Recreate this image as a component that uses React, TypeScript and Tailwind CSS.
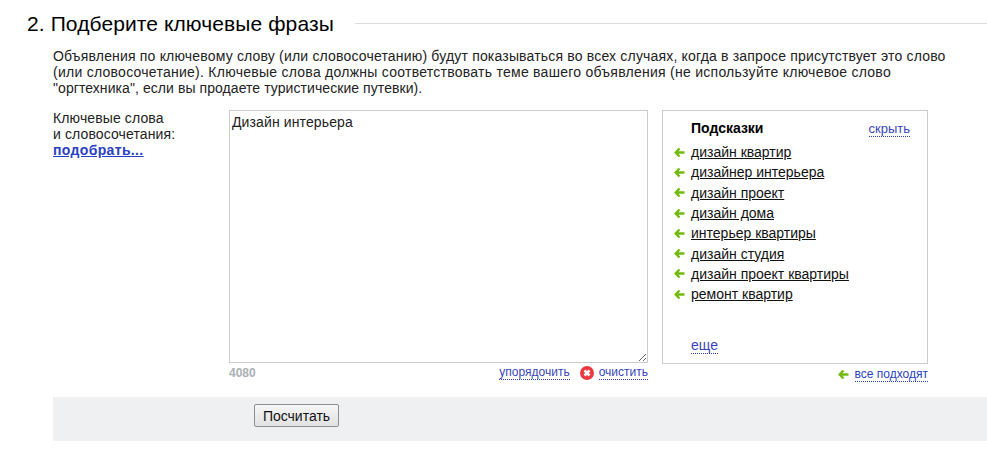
import React from "react";

const hints = [
  "дизайн квартир",
  "дизайнер интерьера",
  "дизайн проект",
  "дизайн дома",
  "интерьер квартиры",
  "дизайн студия",
  "дизайн проект квартиры",
  "ремонт квартир",
];

const GreenArrow = () => (
  <svg width="11" height="11" viewBox="0 0 11 11" className="shrink-0">
    <path d="M5.5 1.5 L1.7 5.5 L5.5 9.5 M2.5 5.5 H10.5" fill="none" stroke="#72bb0e" strokeWidth="2.4" />
  </svg>
);

const App: React.FC = () => {
  return (
    <div className="w-[987px] h-[453px] overflow-hidden bg-white text-[14px] leading-[16px] text-[#222] font-['Liberation_Sans',sans-serif]">
      {/* Heading */}
      <div className="flex items-center pl-[27px] pt-[11px] h-[36px]">
        <h2 className="text-[21px] leading-[24px] tracking-[0.1px] text-black">2. Подберите ключевые фразы</h2>
        <div className="ml-[21px] flex-1 h-px bg-[#ddd]" />
      </div>

      <div className="pl-[53px] pt-[12px]">
        <p className="w-[900px] h-[56px] whitespace-nowrap">
          <span className="tracking-[0.18px]">Объявления по ключевому слову (или словосочетанию) будут показываться во всех случаях, когда в запросе присутствует это слово</span>
          <br />
          <span className="tracking-[0.26px]">(или словосочетание). Ключевые слова должны соответствовать теме вашего объявления (не используйте ключевое слово</span>
          <br />
          <span className="tracking-[0.07px]">"оргтехника", если вы продаете туристические путевки).</span>
        </p>

        <div className="flex mt-[6px]">
          {/* Label */}
          <div className="w-[176px] tracking-[0.12px]">
            Ключевые слова
            <br />и словосочетания:
            <br />
            <a className="font-bold tracking-[0.35px] text-[#2a3fc4] underline">подобрать...</a>
          </div>

          {/* Textarea column */}
          <div className="w-[419px]">
            <textarea
              readOnly
              defaultValue="Дизайн интерьера"
              className="block w-[419px] h-[253px] border border-[#ccc] px-[2px] pt-[3px] pb-[2px] text-[14px] leading-[16px] tracking-[0.12px] text-[#222] outline-none"
            />
            <div className="flex items-center h-[18px] pt-[1px] text-[12px] leading-[14px]">
              <span className="font-bold text-[#aab0b5]">4080</span>
              <a className="ml-auto text-[#3a45bb] border-b border-dotted border-[#2a3fc4]">упорядочить</a>
              <svg width="14" height="14" viewBox="0 0 14 14" className="ml-[10px] mr-[5px]">
                <circle cx="7" cy="7" r="7" fill="#ea3a3f" />
                <path d="M4.5 4.5 L9.5 9.5 M9.5 4.5 L4.5 9.5" stroke="#fff" strokeWidth="2.6" />
              </svg>
              <a className="text-[#3a45bb] border-b border-dotted border-[#2a3fc4]">очистить</a>
            </div>
          </div>

          {/* Hints */}
          <div className="w-[266px] ml-[14px]">
            <div className="h-[254px] border border-[#ccc] pl-[11px] pr-[17px] pt-[9px] flex flex-col">
              <div className="flex items-center justify-between pl-[17px] h-[16px]">
                <b className="text-black">Подсказки</b>
                <a className="text-[13px] leading-[14px] mt-[3px] text-[#3a45bb] border-b border-dotted border-[#2a3fc4]">скрыть</a>
              </div>
              <ul className="mt-[6px]">
                {hints.map((hint) => (
                  <li key={hint} className="flex items-center gap-[6px] h-[20.3px]">
                    <GreenArrow />
                    <a className="text-[#111] underline">{hint}</a>
                  </li>
                ))}
              </ul>
              <div className="mt-auto mb-[10px] pl-[17px]">
                <a className="text-[#3a45bb] border-b border-dotted border-[#2a3fc4]">еще</a>
              </div>
            </div>
            <div className="flex items-center justify-end gap-[6px] h-[20px] text-[12px] leading-[14px]">
              <GreenArrow />
              <a className="text-[#2a3fc4] border-b border-dotted border-[#2a3fc4]">все подходят</a>
            </div>
          </div>
        </div>

        {/* Footer bar */}
        <div className="mt-[13px] h-[44px] bg-[#eff0f1] pl-[201px] pt-[7px]">
          <button className="w-[85px] h-[23px] rounded-[2px] border border-[#8e8e8e] bg-gradient-to-b from-[#f6f6f6] to-[#e2e2e2] text-[14px] text-[#111]">
            Посчитать
          </button>
        </div>
      </div>
    </div>
  );
};

export default App;
